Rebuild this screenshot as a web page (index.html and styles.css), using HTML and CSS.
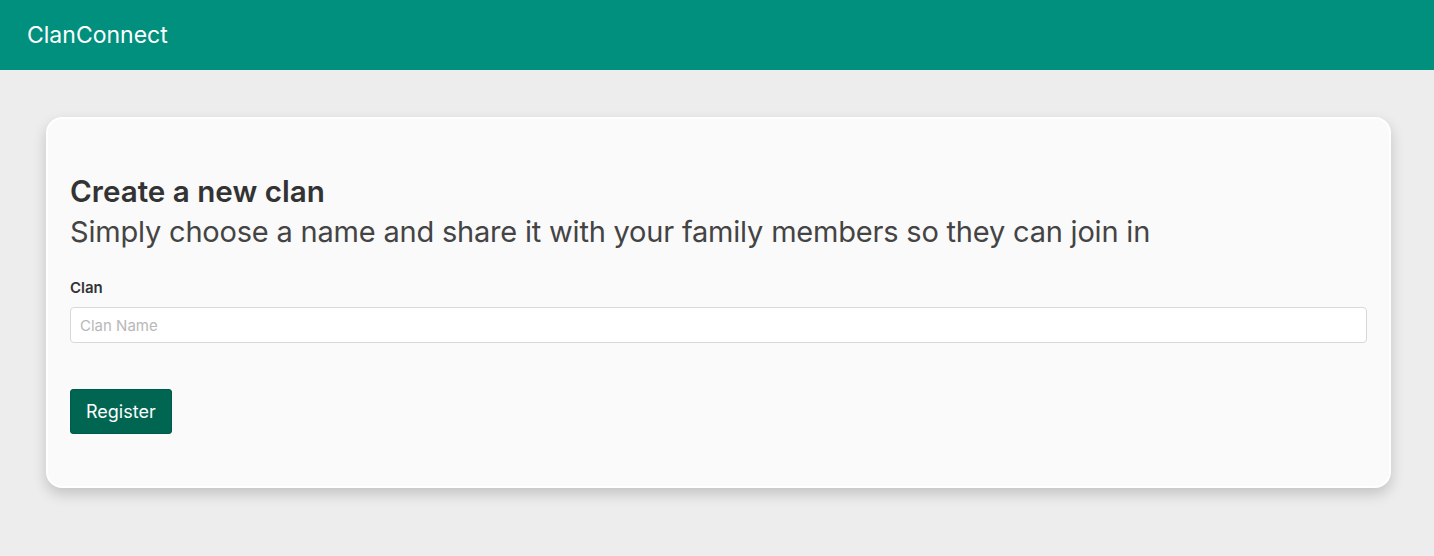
FILE: index.html
```html
<!DOCTYPE html>
<html lang="en">
<head>
<meta charset="utf-8">
<title>ClanConnect</title>
<link rel="stylesheet" href="styles.css">
</head>
<body>
<header class="topbar">
  <div class="brand">ClanConnect</div>
</header>
<main class="page">
  <section class="card">
    <h1 class="title">Create a new clan</h1>
    <p class="subtitle">Simply choose a name and share it with your family members so they can join in</p>
    <form class="form">
      <label class="label" for="clan">Clan</label>
      <input class="input" id="clan" type="text" placeholder="Clan Name">
      <button class="btn" type="button">Register</button>
    </form>
  </section>
</main>
</body>
</html>
```
FILE: styles.css
```css
* { box-sizing: border-box; }
html, body { margin: 0; padding: 0; }
body {
  background: #ededed;
  font-family: Inter, "Noto Sans", "Liberation Sans", sans-serif;
  color: #333;
  height: 556px;
  overflow: hidden;
}
.topbar {
  height: 70px;
  background: #00907d;
  display: flex;
  align-items: center;
  padding-left: 27px;
}
.brand {
  color: #fff;
  font-size: 23px;
  font-weight: 400;
}
.page {
  padding: 47px 43px 0 46px;
}
.card {
  background: #fafafa;
  border: 2px solid #fff;
  border-radius: 16px;
  box-shadow: 0 6px 14px rgba(0,0,0,0.18);
  padding: 55px 22px 52px 22px;
}
.title {
  margin: 0;
  font-size: 29.6px;
  font-weight: 600;
  line-height: 34px;
  color: #333;
}
.subtitle {
  margin: 5px 0 0;
  font-size: 29px;
  font-weight: 400;
  line-height: 38px;
  color: #444;
  letter-spacing: -0.2px;
}
.form {
  display: flex;
  flex-direction: column;
  align-items: flex-start;
  margin-top: 28px;
}
.label {
  font-size: 15px;
  font-weight: 600;
  color: #333;
  line-height: 18px;
}
.input {
  margin-top: 10px;
  width: 100%;
  height: 36px;
  border: 1px solid #d8d8d8;
  border-radius: 4px;
  background: #fff;
  padding: 0 9px;
  font-family: inherit;
  font-size: 15px;
  color: #333;
}
.input::placeholder { color: #b8b8b8; }
.btn {
  margin-top: 46px;
  height: 45px;
  padding: 0 15px;
  background: #006652;
  color: #fff;
  border: 1px solid #00594a;
  border-radius: 3px;
  font-family: inherit;
  font-size: 18px;
  font-weight: 400;
}
```
